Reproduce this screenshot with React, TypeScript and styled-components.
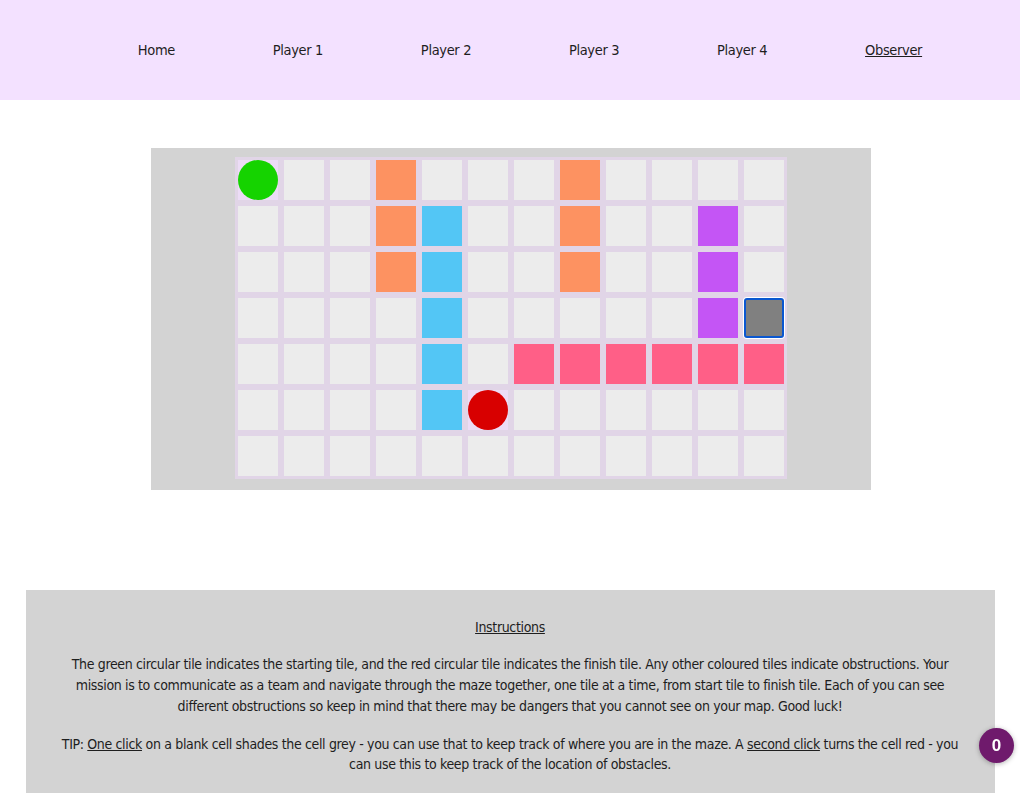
import React from "react";
import styled, { createGlobalStyle } from "styled-components";

const Global = createGlobalStyle`
  html, body { margin: 0; padding: 0; background: #ffffff; }
  body {
    font-family: "DejaVu Sans Condensed", "DejaVu Sans", sans-serif;
    font-stretch: semi-condensed;
    font-size: 14px;
    letter-spacing: -0.35px;
    color: #1e1e1e;
  }
`;

const Nav = styled.nav`
  height: 100px;
  background: #f3e1ff;
  display: flex;
  align-items: center;
`;

const NavList = styled.ul`
  list-style: none;
  margin: 0;
  padding: 0 0 0 40px;
  flex: 1;
  display: flex;
  justify-content: space-evenly;
  font-size: 14.5px;
`;

const NavLink = styled.a<{ $active?: boolean }>`
  color: #1e1e1e;
  text-decoration: ${(p) => (p.$active ? "underline" : "none")};
  cursor: pointer;
`;

const Main = styled.main`
  display: flex;
  flex-direction: column;
  align-items: center;
  padding-top: 48px;
`;

const BoardFrame = styled.div`
  width: 720px;
  height: 342px;
  margin-left: 2px;
  background: #d3d3d3;
  display: flex;
  justify-content: center;
  padding-top: 9px;
  box-sizing: border-box;
`;

const Grid = styled.div`
  display: grid;
  grid-template-columns: repeat(12, 40px);
  grid-auto-rows: 40px;
  gap: 6px;
  padding: 3px;
  background: #e1d5e7;
  align-self: flex-start;
`;

type Kind = "empty" | "orange" | "blue" | "purple" | "pink" | "start" | "finish" | "grey";

const fills: Record<Kind, string> = {
  empty: "#ececec",
  orange: "#fd9261",
  blue: "#53c6f5",
  purple: "#c455f5",
  pink: "#ff5f87",
  start: "#ecdcf6",
  finish: "#ecdcf6",
  grey: "#808080",
};

const Cell = styled.div<{ $kind: Kind }>`
  width: 40px;
  height: 40px;
  box-sizing: border-box;
  background: ${(p) => fills[p.$kind]};
  display: flex;
  align-items: center;
  justify-content: center;
  ${(p) =>
    p.$kind === "grey"
      ? `border: 2px solid #0b57d0; border-radius: 3px; box-shadow: 0 0 0 1px #ffffff;`
      : ""}
`;

const Dot = styled.div<{ $color: string }>`
  width: 40px;
  height: 40px;
  border-radius: 50%;
  background: ${(p) => p.$color};
`;

const Instructions = styled.section`
  width: 95%;
  margin-top: 100px;
  background: #d3d3d3;
  padding: 11px 30px 20px;
  box-sizing: border-box;
  text-align: center;
  line-height: 21px;
`;

const Heading = styled.p`
  margin: 16px 0;
  text-decoration: underline;
`;

const Para = styled.p`
  margin: 16px auto;
  max-width: 915px;
`;

const Tip = styled(Para)`
  margin-top: 17px;
  line-height: 20px;
`;

const U = styled.span`
  text-decoration: underline;
`;

const Badge = styled.div`
  position: fixed;
  right: 6px;
  bottom: 30px;
  width: 35px;
  height: 35px;
  border-radius: 50%;
  background: #6f1a6c;
  color: #ffffff;
  font-family: "Liberation Sans", sans-serif;
  letter-spacing: 0;
  font-weight: bold;
  font-size: 17px;
  display: flex;
  align-items: center;
  justify-content: center;
  box-shadow: 0 1px 5px rgba(0, 0, 0, 0.3);
`;

const layout: string[] = [
  "S..O...O....",
  "...OB..O..P.",
  "...OB..O..P.",
  "....B.....PG",
  "....B.KKKKKK",
  "....BF......",
  "............",
];

const map: Record<string, Kind> = {
  ".": "empty",
  O: "orange",
  B: "blue",
  P: "purple",
  K: "pink",
  S: "start",
  F: "finish",
  G: "grey",
};

const links = ["Home", "Player 1", "Player 2", "Player 3", "Player 4", "Observer"];

export default function App() {
  return (
    <>
      <Global />
      <Nav>
        <NavList>
          {links.map((l) => (
            <li key={l}>
              <NavLink $active={l === "Observer"}>{l}</NavLink>
            </li>
          ))}
        </NavList>
      </Nav>
      <Main>
        <BoardFrame>
          <Grid>
            {layout.flatMap((row, r) =>
              row.split("").map((ch, c) => {
                const kind = map[ch];
                return (
                  <Cell key={`${r}-${c}`} $kind={kind}>
                    {kind === "start" && <Dot $color="#15d300" />}
                    {kind === "finish" && <Dot $color="#d80000" />}
                  </Cell>
                );
              })
            )}
          </Grid>
        </BoardFrame>
        <Instructions>
          <Heading>Instructions</Heading>
          <Para>
            The green circular tile indicates the starting tile, and the red circular tile indicates the
            finish tile. Any other coloured tiles indicate obstructions. Your mission is to communicate as a
            team and navigate through the maze together, one tile at a time, from start tile to finish tile.
            Each of you can see different obstructions so keep in mind that there may be dangers that you
            cannot see on your map. Good luck!
          </Para>
          <Tip>
            TIP: <U>One click</U> on a blank cell shades the cell grey - you can use that to keep track of
            where you are in the maze. A <U>second click</U> turns the cell red - you can use this to keep
            track of the location of obstacles.
          </Tip>
        </Instructions>
      </Main>
      <Badge>0</Badge>
    </>
  );
}
